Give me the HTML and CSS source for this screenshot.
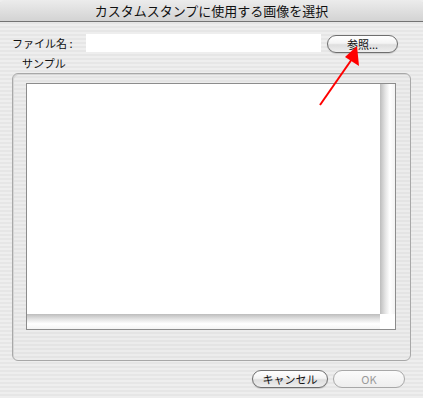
FILE: index.html
```html
<!DOCTYPE html>
<html lang="ja">
<head>
<meta charset="utf-8">
<link rel="stylesheet" href="styles.css">
</head>
<body>
<div class="window">
  <div class="titlebar">カスタムスタンプに使用する画像を選択</div>
  <div class="filerow">
    <span class="label">ファイル名 :</span>
    <div class="field"></div>
    <button class="btn browse">参照...</button>
  </div>
  <div class="sample-label">サンプル</div>
  <div class="group">
    <div class="scrollview">
      <div class="content">
        <div class="canvas"></div>
        <div class="vscroll"></div>
      </div>
      <div class="hrow">
        <div class="hscroll"></div>
        <div class="corner"></div>
      </div>
    </div>
  </div>
  <div class="actions">
    <button class="btn cancel">キャンセル</button>
    <button class="btn ok" disabled>OK</button>
  </div>
  <svg class="arrow" width="60" height="70" viewBox="0 0 60 70">
    <line x1="4" y1="66" x2="36" y2="20" stroke="#ff0000" stroke-width="2"/>
    <polygon points="41,7 43,27 29,18" fill="#ff0000"/>
  </svg>
</div>
</body>
</html>
```
FILE: styles.css
```css
html, body {
  margin: 0;
  padding: 0;
}
body {
  width: 423px;
  height: 398px;
  overflow: hidden;
  font-family: "Noto Sans CJK JP", "Noto Sans", sans-serif;
}
.window {
  position: relative;
  width: 423px;
  height: 398px;
  background: repeating-linear-gradient(to bottom, #eeeeee 0, #eeeeee 2px, #e6e6e6 2px, #e6e6e6 4px);
  display: flex;
  flex-direction: column;
}
.titlebar {
  height: 21px;
  border-bottom: 1px solid #737373;
  background: linear-gradient(to bottom, #ececec, #d3d3d3);
  font-size: 13px;
  line-height: 21px;
  text-align: center;
  color: #111;
  border-radius: 5px 5px 0 0;
}
.filerow {
  display: flex;
  align-items: center;
  margin-top: 12px;
  padding-left: 12px;
  height: 18px;
}
.label {
  width: 74px;
  font-size: 11px;
  color: #111;
  line-height: 18px;
}
.field {
  width: 235px;
  height: 18px;
  background: #fff;
}
.btn {
  font-family: "Noto Sans CJK JP", "Noto Sans", sans-serif;
  font-size: 11px;
  height: 18px;
  padding: 0;
  line-height: 16px;
  border: 1px solid #6e6e6e;
  border-radius: 9px;
  background: linear-gradient(to bottom, #ffffff 0%, #f4f4f4 45%, #dedede 55%, #eeeeee 100%);
  color: #111;
  box-shadow: 0 1px 1px rgba(0,0,0,0.15);
}
.browse {
  width: 71px;
  margin-left: 6px;
  margin-top: 1px;
}
.sample-label {
  margin-top: 4px;
  margin-left: 22px;
  font-size: 11px;
  line-height: 15px;
  height: 15px;
  color: #111;
}
.group {
  margin-top: 2px;
  margin-left: 12px;
  width: 384px;
  height: 277px;
  border: 1px solid #a8a8a8;
  border-radius: 6px;
  box-shadow: inset 1px 1px 0 #d6d6d6;
  padding: 9px 0 0 13px;
  box-sizing: content-box;
  background: repeating-linear-gradient(to bottom, #ececec 0, #ececec 2px, #e4e4e4 2px, #e4e4e4 4px);
}
.scrollview {
  width: 368px;
  height: 245px;
  border: 1px solid #8c8c8c;
  background: #fff;
  display: flex;
  flex-direction: column;
}
.content {
  flex: 1;
  display: flex;
}
.canvas {
  flex: 1;
  background: #fff;
}
.vscroll {
  width: 15px;
  background: linear-gradient(to right, #bdbdbd 0%, #e4e4e4 35%, #ffffff 65%, #f4f4f4 100%);
}
.hrow {
  height: 15px;
  display: flex;
}
.hscroll {
  flex: 1;
  background: linear-gradient(to bottom, #bdbdbd 0%, #e4e4e4 35%, #ffffff 65%, #f4f4f4 100%);
}
.corner {
  width: 15px;
  background: #fff;
}
.actions {
  display: flex;
  justify-content: flex-end;
  gap: 5px;
  margin-top: 9px;
  padding-right: 18px;
}
.cancel {
  width: 76px;
}
.ok {
  width: 72px;
  color: #9a9a9a;
  border-color: #a8a8a8;
  background: linear-gradient(to bottom, #fbfbfb, #eeeeee);
  box-shadow: none;
}
.arrow {
  position: absolute;
  left: 316px;
  top: 39px;
}
```
